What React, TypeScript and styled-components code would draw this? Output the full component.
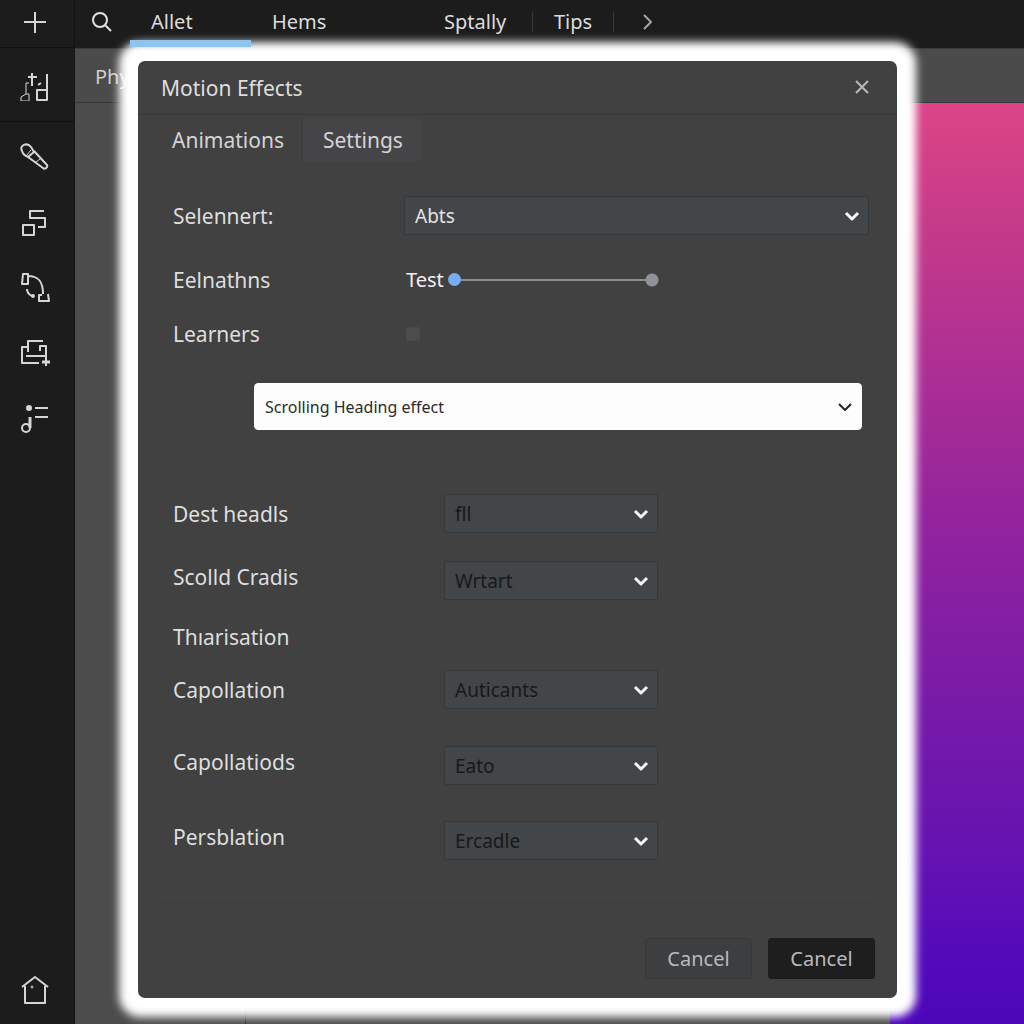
import React from "react";
import styled, { createGlobalStyle, css } from "styled-components";

const GlobalStyle = createGlobalStyle`
  * { box-sizing: border-box; }
  body { margin: 0; background: #1c1c1c; }
  body, button, select, input { font-family: "Noto Sans", "Open Sans", sans-serif; }
`;

const Shell = styled.div`
  display: grid;
  grid-template-columns: 75px 1fr;
  min-height: 100vh;
  background: #1c1c1c;
  color: #dededf;
  font-size: 20px;
`;

const Rail = styled.nav`
  display: flex;
  flex-direction: column;
  border-right: 1px solid #141414;
`;

const RailButton = styled.button<{ $height: number; $ruled?: boolean; $last?: boolean }>`
  display: flex;
  align-items: center;
  justify-content: center;
  height: ${(p) => p.$height}px;
  padding: 0 6px 0 0;
  border: 0;
  border-bottom: ${(p) => (p.$ruled ? "1px solid #111" : "0")};
  margin-top: ${(p) => (p.$last ? "auto" : "0")};
  background: none;
  color: #d6d6d6;
`;

const Tools = styled.div`
  display: flex;
  flex-direction: column;
  padding-top: 3px;
`;

const Workspace = styled.div`
  display: grid;
  grid-template-rows: 48px 55px 1fr;
`;

const TopBar = styled.header`
  position: relative;
  z-index: 2;
  display: flex;
`;

const SearchButton = styled.button`
  width: 55px;
  padding: 0 2px 4px 0;
  border: 0;
  background: none;
  color: #e2e2e2;
  display: flex;
  align-items: center;
  justify-content: center;
`;

const TopTabs = styled.nav`
  display: grid;
  grid-template-columns: 121px 172px 110px 81px 68px;
`;

const TopTab = styled.a<{ $active?: boolean }>`
  flex: 1;
  height: 47px;
  padding: 0 20px 0 21px;
  border-bottom: 7px solid ${(p) => (p.$active ? "#8fc4ee" : "transparent")};
  color: #dcdcdc;
  line-height: 43px;
  text-decoration: none;
`;

const Ruled = styled.span`
  display: flex;
  height: 43px;
  background: linear-gradient(#383838, #383838) right center / 1px 20px no-repeat;
`;

const MoreButton = styled.button`
  height: 43px;
  border: 0;
  background: none;
  color: #a6a6a6;
  display: flex;
  align-items: center;
  justify-content: center;
`;

const SubBar = styled.div`
  padding: 0 20px;
  border-top: 1px solid #3a3a3a;
  border-bottom: 1px solid #383838;
  background: #4b4b4b;
  color: #d0d0d0;
  line-height: 56px;
`;

const Stage = styled.main`
  display: grid;
  grid-template-columns: 171px 1fr 134px;
  background: #4c4c4c;
`;

const SidePanel = styled.div`
  border-right: 1px solid #2c2c2c;
`;

const Artwork = styled.div`
  grid-column: 3;
  background: linear-gradient(180deg, #dc4486 0%, #c43a8a 14%, #a62c96 33%, #8f229f 48%, #771aa8 66%, #6412b2 82%, #540aba 93%, #4c07b8 100%);
`;

const Overlay = styled.div`
  position: absolute;
  z-index: 1;
  inset: 0;
  padding: 61px 127px 26px 138px;
`;

const Dialog = styled.section`
  border-radius: 7px;
  background: #414141;
  box-shadow: 0 0 9px 19px #fff;
  font-size: 21px;
`;

const DialogHeader = styled.header`
  display: flex;
  align-items: center;
  justify-content: space-between;
  height: 54px;
  padding: 0 26px 0 23px;
  border-bottom: 1px solid #383838;
`;

const Title = styled.h2`
  margin: 0;
  font-size: 21px;
  font-weight: 400;
  line-height: 32px;
`;

const CloseButton = styled.button`
  display: flex;
  padding: 0;
  border: 0;
  background: none;
  color: #b9b9b9;
`;

const DialogTabs = styled.div`
  display: flex;
  padding: 4px 13px 0;
`;

const DialogTab = styled.button<{ $active?: boolean }>`
  height: 42px;
  padding: 0 18px 0 20px;
  border: 0;
  border-left: 1px solid ${(p) => (p.$active ? "#393b3c" : "transparent")};
  background: ${(p) => (p.$active ? "#454547" : "none")};
  color: #d4d4d6;
  font-size: 21px;
`;

const Form = styled.form`
  padding: 35px 28px 0 35px;
`;

const Row = styled.div<{ $narrow?: boolean; $gap?: number; $top?: boolean }>`
  display: grid;
  grid-template-columns: ${(p) => (p.$narrow ? "271px 214px" : "231px 1fr")};
  align-items: ${(p) => (p.$top ? "start" : "center")};
  min-height: 39px;
  margin-top: ${(p) => p.$gap ?? 0}px;
`;

const Label = styled.label`
  line-height: 32px;
`;

const SelectFrame = styled.span<{ $light?: boolean }>`
  display: grid;
  grid-template-columns: 1fr 25px;
  align-items: center;
  ${(p) =>
    p.$light &&
    css`
      margin: 30px 7px 0 81px;
    `}
  svg {
    grid-area: 1 / 2;
    pointer-events: none;
    color: ${(p) => (p.$light ? "#222" : "#f4f4f4")};
  }
`;

const SelectBox = styled.select<{ $look: "main" | "dim" | "light" }>`
  grid-area: 1 / 1 / 2 / 3;
  appearance: none;
  width: 100%;
  height: ${(p) => (p.$look === "light" ? 47 : 39)}px;
  padding: 0 34px 0 10px;
  border: 1px solid ${(p) => (p.$look === "light" ? "#fff" : "#34383a")};
  border-radius: ${(p) => (p.$look === "light" ? 4 : 2)}px;
  background: ${(p) => (p.$look === "light" ? "#fdfdfd" : "#424648")};
  color: ${(p) => ({ main: "#e2e2e2", dim: "#17191a", light: "#2c2c2c" })[p.$look]};
  font-size: ${(p) => (p.$look === "light" ? 16 : 19)}px;
`;

const SliderGroup = styled.div`
  display: flex;
  align-items: center;
  gap: 4px;
  padding-left: 2px;
  color: #f0f0f0;
  font-size: 20px;
`;

const Slider = styled.input`
  appearance: none;
  width: 211px;
  height: 14px;
  margin: 0;
  background:
    radial-gradient(circle at center, #8f9296 6px, transparent 7px) right center / 14px 14px no-repeat,
    linear-gradient(#8b8d8e, #8b8d8e) center / calc(100% - 14px) 2px no-repeat;
  &::-webkit-slider-thumb {
    appearance: none;
    width: 13px;
    height: 13px;
    border-radius: 50%;
    background: #78adf5;
  }
`;

const Check = styled.input`
  appearance: none;
  width: 14px;
  height: 14px;
  margin: 0 0 0 2px;
  background: #4d4d4d;
  border: 1px solid #484848;
`;

const Group = styled.div`
  padding-top: 64px;
`;

const Footer = styled.footer`
  display: flex;
  justify-content: flex-end;
  gap: 16px;
  margin: 42px 22px 0;
  padding: 35px 0 19px;
  border-top: 1px solid #3c3c3c;
`;

const ActionButton = styled.button<{ $solid?: boolean }>`
  width: 107px;
  height: 41px;
  border: 1px solid ${(p) => (p.$solid ? "#1c1c1c" : "#363839")};
  border-radius: 3px;
  background: ${(p) => (p.$solid ? "#1e1e1e" : "#3c3e3f")};
  color: #b9babc;
  font-size: 20px;
`;

type GlyphProps = { size?: number; width?: number; children: React.ReactNode };
const Glyph = ({ size = 32, width = 2, children }: GlyphProps) => (
  <svg width={size} height={size} viewBox={`0 0 ${size} ${size}`} fill="none" stroke="currentColor" strokeWidth={width} strokeLinejoin="round" aria-hidden="true">
    {children}
  </svg>
);

const tools = [
  { name: "Brush", art: <><path d="M4 9c-3-6 5-9 9-4l3 5-6 5c-3-1-5-3-6-6zM16 9l13 14c1 2-2 5-4 3L10 15" /><path d="M13 8l-5 6M18 20l4-3" strokeWidth="1" /></> },
  { name: "Arrange", art: <path d="M5 18h11v10H5zM26 4H12v7h15v9h-7" /> },
  { name: "Path", art: <><path d="M5 2h5v10H4zM10 4c11 0 15 6 15 18M24 23h-3v6h10l-1-7M9 17c0 4 3 6 5 7" /><circle cx="15" cy="24" r="1" fill="currentColor" /></> },
  { name: "Add layer", art: <><path d="M10 15V4h15M9 10H4v16h17M8 19h20V9h-6v5" /><path d="M28 18v11" /><path d="M24 25h8" strokeWidth="3" /></> },
  { name: "List", art: <><path d="M17 6h13M17 15h13" /><path d="M12 15v11" strokeWidth="3" /><circle cx="8" cy="26" r="4" /><circle cx="11" cy="6" r="2" fill="currentColor" /></> },
];

type PickerProps = { id: string; value: string; look?: "main" | "dim" | "light"; label?: string };
const Picker = ({ id, value, look = "dim", label }: PickerProps) => (
  <SelectFrame $light={look === "light"}>
    <SelectBox id={id} $look={look} aria-label={label} defaultValue={value}>
      <option>{value}</option>
    </SelectBox>
    <Glyph size={16} width={look === "light" ? 2 : 3}>
      <path d="M2 5l6 6 6-6" />
    </Glyph>
  </SelectFrame>
);

const options = [
  { label: "Dest headls", value: "fll" },
  { label: "Scolld Cradis", value: "Wrtart", gap: 28, top: true },
  { label: "Thıarisation", gap: 17 },
  { label: "Capollation", value: "Auticants", gap: 14 },
  { label: "Capollatiods", value: "Eato", gap: 37, top: true },
  { label: "Persblation", value: "Ercadle", gap: 36, top: true },
];

export default function App() {
  return (
    <Shell>
      <GlobalStyle />
      <Rail aria-label="Tools">
        <RailButton $height={48} $ruled aria-label="New">
          <Glyph size={24}><path d="M13 0v21M2 10h22" /></Glyph>
        </RailButton>
        <RailButton $height={74} $ruled aria-label="Design">
          <Glyph>
            <path d="M19 21h10v10H19zM29 5v16M10 8h9M14 4v13M23 14l-3 2" />
            <path d="M3 32v-4l5-3h3v7zM8 25V14h3" strokeWidth="1" />
          </Glyph>
        </RailButton>
        <Tools>
          {tools.map((tool) => (
            <RailButton key={tool.name} $height={65} aria-label={tool.name}>
              <Glyph>{tool.art}</Glyph>
            </RailButton>
          ))}
        </Tools>
        <RailButton $height={68} $last aria-label="Home">
          <Glyph>
            <path d="M7 12v17h20V12M4 13L17 3l13 10" />
            <circle cx="14" cy="13" r="1" strokeWidth="1" />
          </Glyph>
        </RailButton>
      </Rail>

      <Workspace>
        <TopBar>
          <SearchButton aria-label="Search">
            <Glyph size={22}><circle cx="9" cy="9" r="7" /><path d="M14 14l6 6" /></Glyph>
          </SearchButton>
          <TopTabs>
            <TopTab href="#allet" $active>Allet</TopTab>
            <TopTab href="#hems">Hems</TopTab>
            <Ruled><TopTab href="#sptally">Sptally</TopTab></Ruled>
            <Ruled><TopTab href="#tips">Tips</TopTab></Ruled>
            <MoreButton aria-label="More">
              <Glyph size={16}><path d="M4 1l7 7-7 7" /></Glyph>
            </MoreButton>
          </TopTabs>
        </TopBar>
        <SubBar>Phy</SubBar>
        <Stage>
          <SidePanel />
          <Artwork />
        </Stage>
      </Workspace>

      <Overlay>
        <Dialog role="dialog" aria-labelledby="dialog-title">
          <DialogHeader>
            <Title id="dialog-title">Motion Effects</Title>
            <CloseButton aria-label="Close">
              <Glyph size={18}><path d="M3 2l12 12M15 2L3 14" /></Glyph>
            </CloseButton>
          </DialogHeader>
          <DialogTabs role="tablist">
            <DialogTab role="tab">Animations</DialogTab>
            <DialogTab role="tab" $active aria-selected>Settings</DialogTab>
          </DialogTabs>
          <Form>
            <Row>
              <Label htmlFor="selennert">Selennert:</Label>
              <Picker id="selennert" value="Abts" look="main" />
            </Row>
            <Row $gap={25}>
              <Label htmlFor="test">Eelnathns</Label>
              <SliderGroup>
                <span>Test</span>
                <Slider id="test" type="range" min={0} max={100} defaultValue={0} />
              </SliderGroup>
            </Row>
            <Row $gap={15}>
              <Label htmlFor="learners">Learners</Label>
              <Check id="learners" type="checkbox" />
            </Row>
            <Picker id="effect" value="Scrolling Heading effect" look="light" label="Effect" />
            <Group>
              {options.map((o) => (
                <Row key={o.label} $narrow $gap={o.gap} $top={o.top}>
                  {o.value ? <Label htmlFor={o.label}>{o.label}</Label> : <span>{o.label}</span>}
                  {o.value && <Picker id={o.label} value={o.value} />}
                </Row>
              ))}
            </Group>
          </Form>
          <Footer>
            <ActionButton>Cancel</ActionButton>
            <ActionButton $solid>Cancel</ActionButton>
          </Footer>
        </Dialog>
      </Overlay>
    </Shell>
  );
}
